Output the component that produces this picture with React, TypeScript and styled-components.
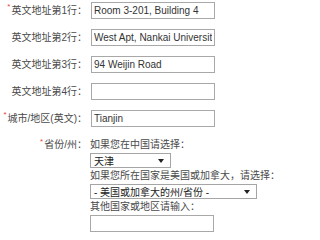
import React from "react";
import styled, { createGlobalStyle } from "styled-components";

const GlobalStyle = createGlobalStyle`
  html, body {
    margin: 0;
    padding: 0;
    background: #fff;
  }
  body {
    font-family: "Liberation Sans", "Noto Sans CJK SC", sans-serif;
    font-size: 10px;
    color: #4a4a4a;
  }
`;

const Form = styled.div`
  display: flex;
  flex-direction: column;
  gap: 10px;
  padding-top: 2px;
`;

const Row = styled.div<{ $top?: boolean }>`
  display: grid;
  grid-template-columns: 87px 1fr;
  column-gap: 3px;
  align-items: ${(p) => (p.$top ? "start" : "center")};
`;

const Label = styled.label`
  text-align: right;
  white-space: nowrap;
  line-height: 16px;
`;

const Star = styled.span`
  color: #e8423a;
  font-size: 8px;
  vertical-align: super;
  line-height: 0;
  margin-right: 1px;
`;

const TextInput = styled.input<{ $inset?: boolean }>`
  box-sizing: border-box;
  width: 124px;
  height: 17px;
  margin: 0 0 0 ${(p) => (p.$inset ? 0 : 1)}px;
  padding: 0 2px;
  border: 1px solid #a8a8a8;
  font: inherit;
  color: #333;
  background: #fff;
  outline: none;
`;

const Stack = styled.div`
  display: flex;
  flex-direction: column;
  align-items: flex-start;
`;

const Hint = styled.div`
  line-height: 16px;
  white-space: nowrap;
`;

const Select = styled.div<{ $w: number }>`
  box-sizing: border-box;
  display: flex;
  align-items: center;
  justify-content: space-between;
  width: ${(p) => p.$w}px;
  height: 15px;
  padding: 0 6px 0 3px;
  border: 1px solid #a5a5a5;
  color: #222;
  white-space: nowrap;
`;

const Arrow = () => (
  <svg width="6" height="4" viewBox="0 0 6 4">
    <polygon points="0,0 6,0 3,4" fill="#222" />
  </svg>
);

const lines = [
  { n: 1, v: "Room 3-201, Building 4", req: true },
  { n: 2, v: "West Apt, Nankai University", req: false },
  { n: 3, v: "94 Weijin Road", req: false },
  { n: 4, v: "", req: false },
];

export default function App() {
  return (
    <>
      <GlobalStyle />
      <Form>
        {lines.map((l) => (
          <Row key={l.n}>
            <Label>
              {l.req && <Star>*</Star>}英文地址第{l.n}行：
            </Label>
            <TextInput defaultValue={l.v} />
          </Row>
        ))}
        <Row>
          <Label>
            <Star>*</Star>城市/地区(英文)：
          </Label>
          <TextInput defaultValue="Tianjin" />
        </Row>
        <Row $top>
          <Label>
            <Star>*</Star>省份/州：
          </Label>
          <Stack>
            <Hint>如果您在中国请选择：</Hint>
            <Select $w={81}>
              <span>天津</span>
              <Arrow />
            </Select>
            <Hint>如果您所在国家是美国或加拿大，请选择：</Hint>
            <Select $w={167}>
              <span>- 美国或加拿大的州/省份 -</span>
              <Arrow />
            </Select>
            <Hint>其他国家或地区请输入：</Hint>
            <TextInput $inset defaultValue="" />
          </Stack>
        </Row>
      </Form>
    </>
  );
}
